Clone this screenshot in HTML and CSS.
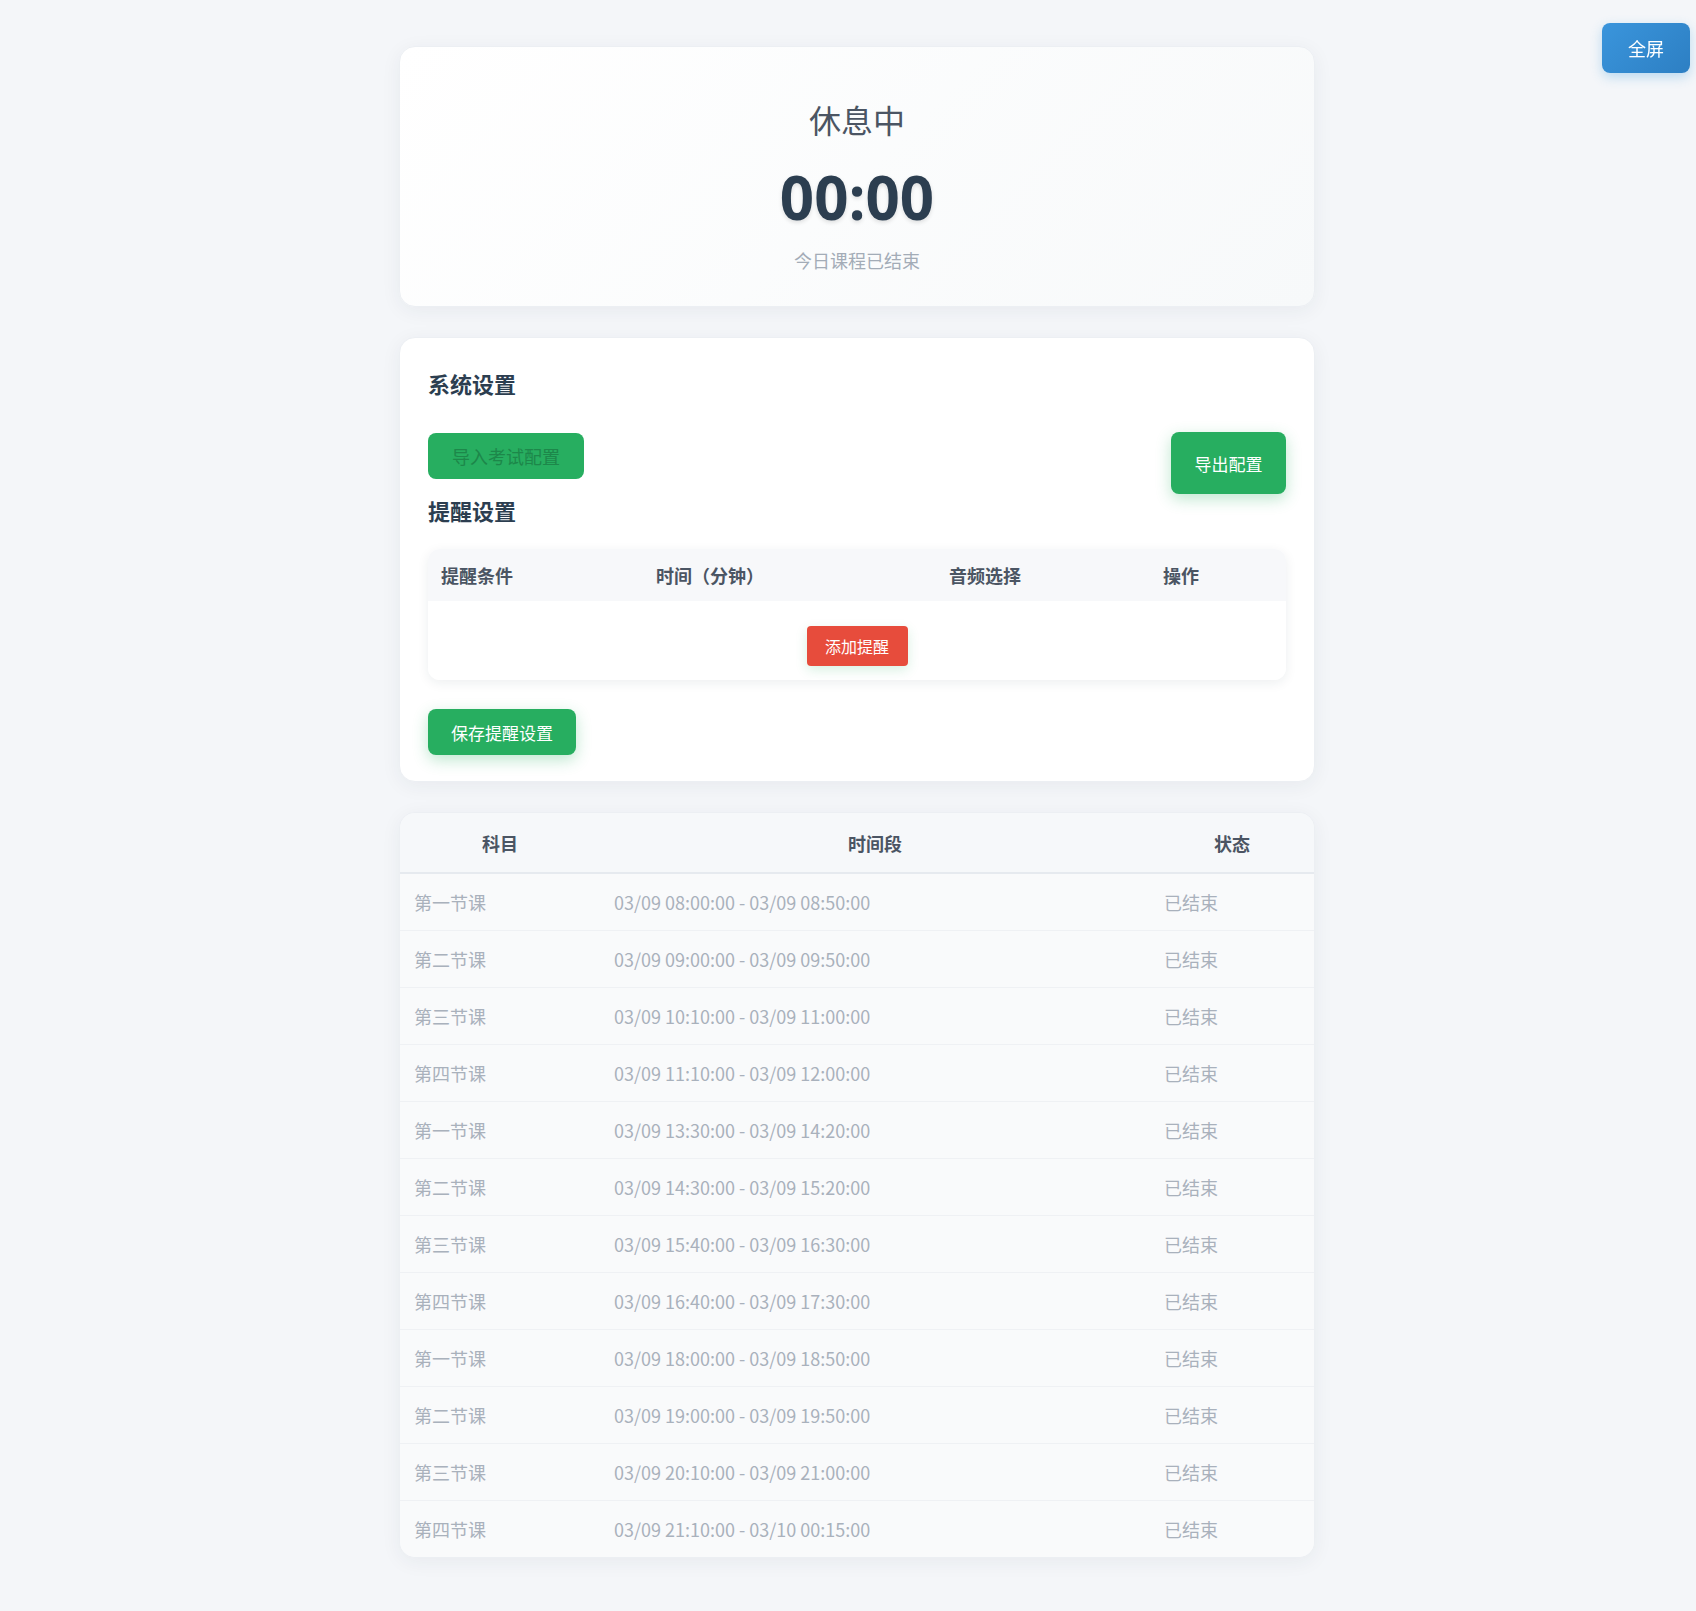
FILE: index.html
```html
<!DOCTYPE html>
<html lang="zh-CN">
<head>
<meta charset="utf-8">
<title>课程计时</title>
<link rel="stylesheet" href="styles.css">
</head>
<body>
<button class="fullscreen-btn">全屏</button>
<div class="container">
  <section class="card timer-card">
    <div class="status">休息中</div>
    <div class="timer">00:00</div>
    <div class="subtitle">今日课程已结束</div>
  </section>

  <section class="card settings-card">
    <h2 class="section-title">系统设置</h2>
    <div class="config-row">
      <label class="btn btn-import">导入考试配置</label>
      <button class="btn btn-export">导出配置</button>
    </div>
    <h2 class="section-title">提醒设置</h2>
    <div class="reminder-table">
      <div class="reminder-head">
        <div class="rc rc1">提醒条件</div>
        <div class="rc rc2">时间（分钟）</div>
        <div class="rc rc3">音频选择</div>
        <div class="rc rc4">操作</div>
      </div>
      <div class="reminder-body">
        <button class="btn btn-add">添加提醒</button>
      </div>
    </div>
    <button class="btn btn-save">保存提醒设置</button>
  </section>

  <section class="card schedule-card">
    <table class="schedule">
      <thead>
        <tr><th class="c1">科目</th><th class="c2">时间段</th><th class="c3">状态</th></tr>
      </thead>
      <tbody>
        <tr><td>第一节课</td><td>03/09 08:00:00 - 03/09 08:50:00</td><td>已结束</td></tr>
        <tr><td>第二节课</td><td>03/09 09:00:00 - 03/09 09:50:00</td><td>已结束</td></tr>
        <tr><td>第三节课</td><td>03/09 10:10:00 - 03/09 11:00:00</td><td>已结束</td></tr>
        <tr><td>第四节课</td><td>03/09 11:10:00 - 03/09 12:00:00</td><td>已结束</td></tr>
        <tr><td>第一节课</td><td>03/09 13:30:00 - 03/09 14:20:00</td><td>已结束</td></tr>
        <tr><td>第二节课</td><td>03/09 14:30:00 - 03/09 15:20:00</td><td>已结束</td></tr>
        <tr><td>第三节课</td><td>03/09 15:40:00 - 03/09 16:30:00</td><td>已结束</td></tr>
        <tr><td>第四节课</td><td>03/09 16:40:00 - 03/09 17:30:00</td><td>已结束</td></tr>
        <tr><td>第一节课</td><td>03/09 18:00:00 - 03/09 18:50:00</td><td>已结束</td></tr>
        <tr><td>第二节课</td><td>03/09 19:00:00 - 03/09 19:50:00</td><td>已结束</td></tr>
        <tr><td>第三节课</td><td>03/09 20:10:00 - 03/09 21:00:00</td><td>已结束</td></tr>
        <tr><td>第四节课</td><td>03/09 21:10:00 - 03/10 00:15:00</td><td>已结束</td></tr>
      </tbody>
    </table>
  </section>
</div>
</body>
</html>
```

FILE: styles.css
```css
* { box-sizing: border-box; }

html, body {
  margin: 0;
}

body {
  background: #f4f6f9;
  font-family: "Noto Sans CJK SC", "Noto Sans", sans-serif;
  color: #2c3e50;
  padding: 46px 0 50px 18px;
}

.container {
  width: 916px;
  margin: 0 auto;
  display: flex;
  flex-direction: column;
  gap: 30px;
}

.card {
  background: #ffffff;
  border-radius: 16px;
  box-shadow: 0 4px 20px rgba(30, 45, 70, 0.06);
  border: 1px solid #eceff3;
}

/* timer card */
.timer-card {
  background: linear-gradient(135deg, #ffffff 0%, #f7f9fa 100%);
  padding: 48px 30px 31px;
  text-align: center;
  height: 261px;
}

.status {
  font-size: 32px;
  line-height: 48px;
  color: #4b5563;
}

.timer {
  font-family: "Open Sans", "Noto Sans", sans-serif;
  font-weight: 700;
  font-size: 60px;
  line-height: 72px;
  margin-top: 18px;
  color: #2c3e50;
  text-shadow: 0 2px 4px rgba(0, 0, 0, 0.12);
}

.subtitle {
  font-size: 18px;
  line-height: 27px;
  margin-top: 14px;
  color: #a3acb7;
}

/* settings card */
.settings-card {
  padding: 29px 28px 26px;
}

.section-title {
  margin: 0;
  font-size: 22px;
  line-height: 33px;
  font-weight: 700;
  color: #2c3e50;
}

.config-row {
  display: flex;
  justify-content: space-between;
  align-items: flex-start;
  margin-top: 32px;
  height: 62px;
}

.btn {
  border: none;
  border-radius: 8px;
  font-family: "Noto Sans CJK SC", sans-serif;
  color: #ffffff;
  cursor: pointer;
  display: inline-flex;
  align-items: center;
  justify-content: center;
}

.btn-import {
  background: #27ae60;
  color: #1d874a;
  font-size: 18px;
  width: 156px;
  height: 46px;
  margin-top: 1px;
}

.btn-export {
  background: #27ae60;
  font-size: 17px;
  width: 115px;
  height: 62px;
  box-shadow: 0 5px 15px rgba(39, 174, 96, 0.3);
}

.reminder-table {
  margin-top: 22px;
  border-radius: 12px;
  overflow: hidden;
  box-shadow: 0 3px 12px rgba(30, 45, 70, 0.08);
}

.reminder-head {
  display: flex;
  height: 52px;
  align-items: center;
  background: #f7f8fa;
}

.rc {
  padding: 0 13px;
  font-size: 18px;
  font-weight: 700;
  color: #4b5563;
}

.rc1 { width: 215px; }
.rc2 { width: 293px; }
.rc3 { width: 214px; }
.rc4 { flex: 1; }

.reminder-body {
  background: #ffffff;
  display: flex;
  justify-content: center;
  padding: 25px 0 14px;
}

.btn-add {
  background: #e74c3c;
  font-size: 16px;
  width: 101px;
  height: 40px;
  border-radius: 4px;
  box-shadow: 0 4px 12px rgba(39, 174, 96, 0.18);
}

.btn-save {
  background: #27ae60;
  font-size: 17px;
  width: 148px;
  height: 46px;
  margin-top: 29px;
  box-shadow: 0 5px 15px rgba(39, 174, 96, 0.3);
}

/* schedule */
.schedule-card {
  overflow: hidden;
  background: #f9fafb;
}

.schedule {
  width: 100%;
  border-collapse: collapse;
  table-layout: fixed;
}

.schedule th {
  height: 60px;
  background: #f6f8fa;
  border-bottom: 2px solid #e6eaef;
  font-size: 18px;
  font-weight: 700;
  color: #4b5563;
  text-align: center;
}

.schedule .c1 { width: 200px; }
.schedule .c2 { width: 550px; }

.schedule td {
  height: 57px;
  padding: 0 14px;
  font-size: 18px;
  color: #a9b1bc;
  border-bottom: 1px solid #eff1f4;
  background: #f9fafb;
}

.schedule tbody tr:last-child td {
  border-bottom: none;
}

.fullscreen-btn {
  position: fixed;
  top: 23px;
  right: 6px;
  width: 88px;
  height: 50px;
  border: none;
  border-radius: 8px;
  background: linear-gradient(135deg, #3a95dc 0%, #2d7fc3 100%);
  color: #ffffff;
  font-family: "Noto Sans CJK SC", sans-serif;
  font-size: 18px;
  box-shadow: 0 4px 12px rgba(52, 152, 219, 0.3);
}
```
